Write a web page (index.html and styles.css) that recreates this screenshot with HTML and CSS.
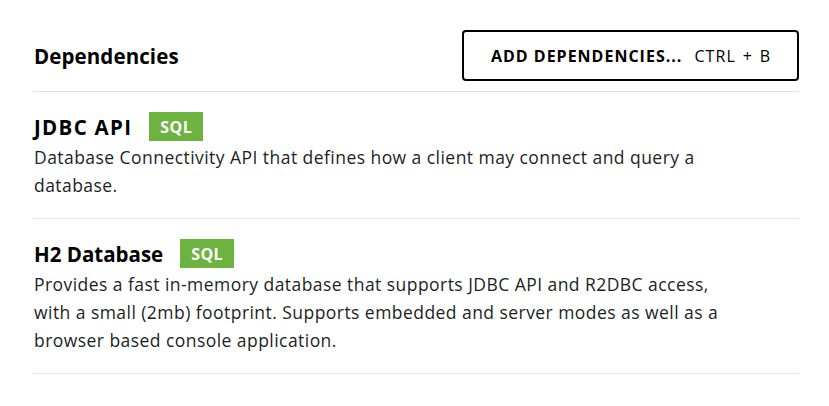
FILE: index.html
```
<!DOCTYPE html>
<html>
<head>
<meta charset="utf-8">
<link rel="stylesheet" href="styles.css">
</head>
<body>
<section class="deps">
  <header class="deps-head">
    <h2 class="deps-title">Dependencies</h2>
    <button class="add-btn"><strong>ADD DEPENDENCIES...</strong><span class="kbd">CTRL + B</span></button>
  </header>
  <div class="dep">
    <div class="dep-title-row">
      <span class="dep-name wide">JDBC API</span>
      <span class="badge">SQL</span>
    </div>
    <p class="dep-desc">Database Connectivity API that defines how a client may connect and query a database.</p>
  </div>
  <div class="dep">
    <div class="dep-title-row">
      <span class="dep-name">H2 Database</span>
      <span class="badge">SQL</span>
    </div>
    <p class="dep-desc">Provides a fast in-memory database that supports JDBC API and R2DBC access, with a small (2mb) footprint. Supports embedded and server modes as well as a browser based console application.</p>
  </div>
</section>
</body>
</html>
```
FILE: styles.css
```
html, body {
  margin: 0;
  padding: 0;
  background: #ffffff;
}
body {
  font-family: "Open Sans", "Liberation Sans", sans-serif;
  color: #1b1f23;
}
.deps {
  width: 766px;
  margin-left: 33px;
}
.deps-head {
  display: flex;
  justify-content: space-between;
  align-items: center;
  padding-top: 30px;
  padding-bottom: 10px;
  border-bottom: 1px solid #dfe6e6;
}
.deps-title {
  margin: 0;
  padding-left: 1px;
  font-size: 20.5px;
  font-weight: 700;
  letter-spacing: 0.1px;
  color: #000;
}
.add-btn {
  box-sizing: border-box;
  width: 337px;
  height: 51px;
  border: 2px solid #000;
  border-radius: 4px;
  background: #fff;
  font-family: inherit;
  font-size: 16px;
  color: #000;
  display: flex;
  align-items: center;
  justify-content: center;
  gap: 12px;
  padding: 0 0 0 1px;
}
.add-btn strong {
  font-weight: 700;
  letter-spacing: 1px;
}
.kbd {
  font-weight: 400;
  letter-spacing: 1.1px;
  word-spacing: 1.5px;
}
.dep {
  padding: 20px 0 19px 1px;
  border-bottom: 1px solid #dfe6e6;
}
.dep-title-row {
  display: flex;
  align-items: center;
  gap: 17px;
  height: 29px;
}
.dep-name {
  font-size: 20.5px;
  font-weight: 700;
  color: #000;
}
.dep-name.wide {
  letter-spacing: 1.3px;
}
.badge {
  background: #6db33f;
  color: #fff;
  font-size: 16px;
  font-weight: 700;
  height: 29px;
  padding: 0 11px;
  display: flex;
  align-items: center;
  letter-spacing: 0.4px;
}
.dep-desc {
  margin: 2px 0 0;
  font-size: 17.5px;
  line-height: 28px;
  letter-spacing: 0.45px;
  max-width: 700px;
}
```
